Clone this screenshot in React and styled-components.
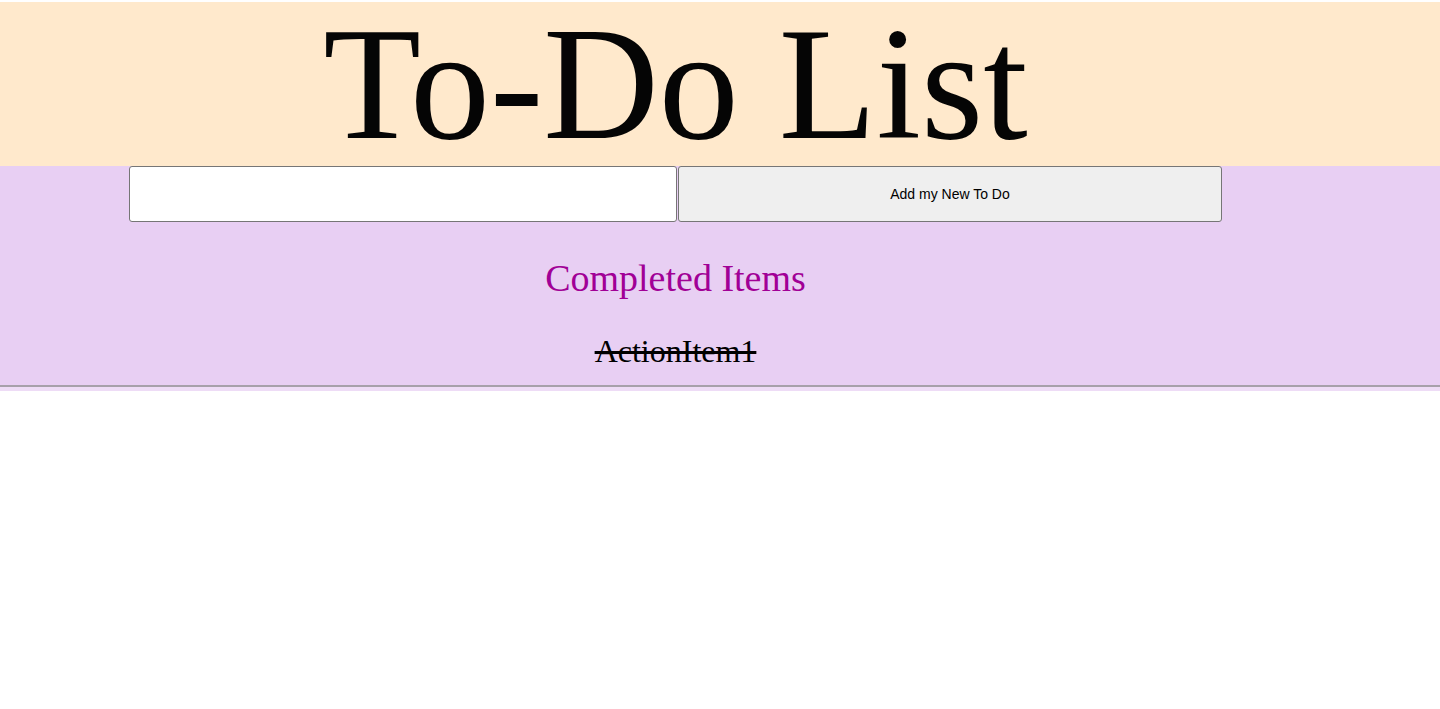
import React from "react";
import styled, { createGlobalStyle } from "styled-components";

const Global = createGlobalStyle`
  html, body { margin: 0; padding: 0; background: #ffffff; }
  body { font-family: "Liberation Serif", "Times New Roman", serif; padding-top: 2px; }
`;

const Header = styled.header`
  background: #ffe9cc;
  height: 164px;
`;

const Column = styled.div`
  margin-left: 129px;
  width: 1093px;
  text-align: center;
`;

const Title = styled.h1`
  margin: 0;
  font-family: "Liberation Serif", "Times New Roman", serif;
  font-weight: 400;
  font-size: 160px;
  line-height: 164px;
  color: #050505;
  white-space: nowrap;
  overflow: visible;
`;

const Body = styled.section`
  background: #e8cff3;
  padding-bottom: 15px;
  border-bottom: 2px solid #a7a0aa;
`;

const Strip = styled.div`
  height: 4px;
  background: #eedcf6;
`;

const Form = styled.form`
  display: flex;
  height: 56px;
  gap: 1px;
`;

const TextInput = styled.input`
  flex: 1 1 0;
  min-width: 0;
  box-sizing: border-box;
  height: 100%;
  margin: 0;
  border: 1px solid #767676;
  border-radius: 3px;
  background: #ffffff;
  font-size: 16px;
  padding: 0 8px;
`;

const AddButton = styled.button`
  flex: 1 1 0;
  min-width: 0;
  box-sizing: border-box;
  height: 100%;
  margin: 0;
  border: 1px solid #767676;
  border-radius: 3px;
  background: #efefef;
  color: #000;
  font-family: "Liberation Sans", Arial, sans-serif;
  font-size: 14px;
`;

const SectionTitle = styled.h2`
  margin: 34px 0 0;
  font-weight: 400;
  font-size: 38px;
  color: #a10096;
`;

const DoneItem = styled.p`
  margin: 33px 0 0;
  font-size: 32px;
  color: #000;
  text-decoration: line-through;
`;

export default function App() {
  return (
    <>
      <Global />
      <Header>
        <Column>
          <Title>To-Do List</Title>
        </Column>
      </Header>
      <Body>
        <Column>
          <Form onSubmit={(e) => e.preventDefault()}>
            <TextInput type="text" />
            <AddButton type="submit">Add my New To Do</AddButton>
          </Form>
          <SectionTitle>Completed Items</SectionTitle>
          <DoneItem>ActionItem1</DoneItem>
        </Column>
      </Body>
      <Strip />
    </>
  );
}
